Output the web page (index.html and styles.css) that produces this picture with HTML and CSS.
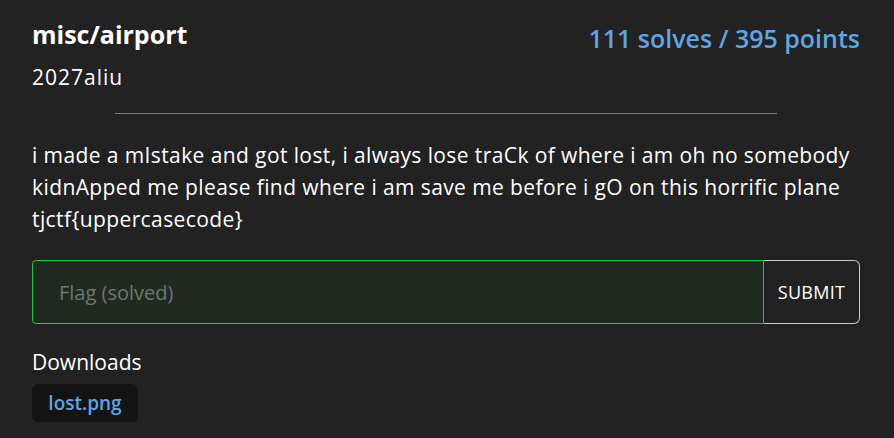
FILE: index.html
```html
<!DOCTYPE html>
<html>
<head>
<meta charset="utf-8">
<link rel="stylesheet" href="styles.css">
</head>
<body>
<div class="card">
  <div class="header">
    <div class="titles">
      <h1 class="title">misc/airport</h1>
      <div class="author">2027aliu</div>
    </div>
    <div class="stats">111 solves / 395 points</div>
  </div>
  <hr class="divider">
  <p class="desc">i made a mIstake and got lost, i always lose traCk of where i am oh no somebody kidnApped me please find where i am save me before i gO on this horrific plane tjctf{uppercasecode}</p>
  <form class="flag-form">
    <input class="flag-input" type="text" placeholder="Flag (solved)">
    <button class="submit" type="button">SUBMIT</button>
  </form>
  <div class="downloads-label">Downloads</div>
  <div class="downloads">
    <a class="file" href="#">lost.png</a>
  </div>
</div>
</body>
</html>
```

FILE: styles.css
```css
* { box-sizing: border-box; }
html, body { margin: 0; padding: 0; background: #222222; }
body {
  color: #ffffff;
  font-family: "Open Sans", "Noto Sans", sans-serif;
  width: 894px;
  height: 438px;
  overflow: hidden;
}
.card {
  padding: 18px 34px 0 32px;
}
.header {
  display: flex;
  justify-content: space-between;
  align-items: flex-start;
}
.title {
  margin: 0;
  font-size: 25px;
  font-weight: 700;
  line-height: 32px;
}
.author {
  margin-top: 13px;
  font-size: 21px;
  letter-spacing: 1px;
  line-height: 28px;
}
.stats {
  color: #5da6e2;
  font-size: 25px;
  font-weight: 600;
  line-height: 40px;
}
.divider {
  width: 80%;
  margin: 22px auto 0;
  border: 0;
  border-top: 1px solid #777777;
  height: 0;
}
.desc {
  margin: 25px 0 0;
  font-size: 21px;
  letter-spacing: 0.4px;
  line-height: 32px;
}
.flag-form {
  display: flex;
  margin-top: 25px;
}
.flag-input {
  flex: 1;
  height: 64px;
  background: #212a21;
  border: 1px solid #1fc84a;
  border-radius: 4px 0 0 4px;
  padding: 0 26px;
  font-family: inherit;
  font-size: 20px;
  color: #fff;
  outline: none;
}
.flag-input::placeholder { color: #707570; }
.submit {
  width: 96px;
  height: 64px;
  background: #222222;
  border: 1px solid #cccccc;
  border-left: 0;
  border-radius: 0 6px 6px 0;
  color: #ffffff;
  font-family: inherit;
  font-size: 18px;
  letter-spacing: 0.3px;
  padding: 0;
}
.downloads-label {
  margin-top: 24px;
  font-size: 21px;
  line-height: 28px;
}
.downloads {
  margin-top: 8px;
  display: flex;
}
.file {
  display: inline-block;
  background: #131313;
  color: #5da6e2;
  font-weight: 600;
  font-size: 19px;
  line-height: 38px;
  width: 106px;
  text-align: center;
  border-radius: 6px;
  text-decoration: none;
}
```
